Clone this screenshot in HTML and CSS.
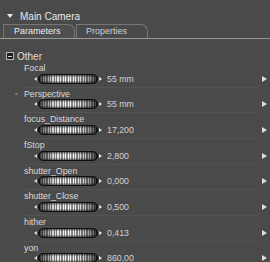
FILE: index.html
```html
<!DOCTYPE html>
<html lang="en">
<head>
    <meta charset="UTF-8">
    <title>Main Camera</title>
    <link rel="stylesheet" href="styles.css">
</head>
<body>
    <div class="panel">
        <div class="title"><span class="caret"></span>Main Camera</div>
        <div class="tabs">
            <div class="tab active">Parameters</div>
            <div class="tab">Properties</div>
        </div>
        <div class="group"><span class="minus"></span>Other</div>
        <div class="params">
            <div class="param">
                <div class="name">Focal</div>
                <div class="control"><div class="slider"><i class="nub left"></i><div class="track"></div><i class="nub right"></i></div><span class="value">55 mm</span><span class="more"></span></div>
            </div>
            <div class="param">
                <div class="name"><span class="key"></span>Perspective</div>
                <div class="control"><div class="slider"><i class="nub left"></i><div class="track"></div><i class="nub right"></i></div><span class="value">55 mm</span><span class="more"></span></div>
            </div>
            <div class="param">
                <div class="name">focus_Distance</div>
                <div class="control"><div class="slider"><i class="nub left"></i><div class="track"></div><i class="nub right"></i></div><span class="value">17,200</span><span class="more"></span></div>
            </div>
            <div class="param">
                <div class="name">fStop</div>
                <div class="control"><div class="slider"><i class="nub left"></i><div class="track"></div><i class="nub right"></i></div><span class="value">2,800</span><span class="more"></span></div>
            </div>
            <div class="param">
                <div class="name">shutter_Open</div>
                <div class="control"><div class="slider"><i class="nub left"></i><div class="track"></div><i class="nub right"></i></div><span class="value">0,000</span><span class="more"></span></div>
            </div>
            <div class="param">
                <div class="name">shutter_Close</div>
                <div class="control"><div class="slider"><i class="nub left"></i><div class="track"></div><i class="nub right"></i></div><span class="value">0,500</span><span class="more"></span></div>
            </div>
            <div class="param">
                <div class="name">hither</div>
                <div class="control"><div class="slider"><i class="nub left"></i><div class="track"></div><i class="nub right"></i></div><span class="value">0,413</span><span class="more"></span></div>
            </div>
            <div class="param">
                <div class="name">yon</div>
                <div class="control"><div class="slider"><i class="nub left"></i><div class="track"></div><i class="nub right"></i></div><span class="value">860,00</span><span class="more"></span></div>
            </div>
        </div>
    </div>
</body>
</html>
```

FILE: styles.css
```css
html, body {
    margin: 0;
    height: 100%;
    background-color: #4a4a4a;
}

body {
    font-family: 'Liberation Sans', Arial, sans-serif;
    color: #d8d8d8;
    overflow: hidden;
}

.panel {
    width: 270px;
}

/* titre du panneau */
.title {
    display: flex;
    align-items: center;
    height: 14px;
    margin-top: 9px;
    font-size: 10px;
    color: #e8e8e8;
}

.caret {
    width: 0;
    height: 0;
    margin: 0 7px 0 7px;
    border-left: 3.5px solid transparent;
    border-right: 3.5px solid transparent;
    border-top: 4px solid #e6e6e6;
}

/* onglets */
.tabs {
    display: flex;
    height: 14px;
    margin-top: 1px;
    padding-left: 3px;
    border-bottom: 1px solid #9a9a9a;
}

.tab {
    box-sizing: border-box;
    width: 72px;
    height: 14px;
    margin-right: 1px;
    padding-left: 9px;
    border: 1px solid #767676;
    border-bottom: none;
    border-top-right-radius: 7px;
    font-size: 9px;
    line-height: 13px;
    color: #cfcfcf;
}

.tab.active {
    padding-left: 10px;
    background-color: #4f4f4f;
    color: #ececec;
}

/* groupe "Other" */
.group {
    display: flex;
    align-items: center;
    height: 12px;
    margin-top: 11px;
    font-size: 10px;
    color: #dedede;
}

.minus {
    box-sizing: border-box;
    display: flex;
    align-items: center;
    justify-content: center;
    width: 8px;
    height: 8px;
    margin: 0 3px 0 6px;
    border: 1px solid #b5b5b5;
    background-color: #1e1e1e;
}

.minus::before {
    content: "";
    width: 4px;
    height: 1px;
    background-color: #cfcfcf;
}

/* lignes de paramètres */
.param {
    box-sizing: border-box;
    height: 25.7px;
    padding-top: 0.5px;
    background: linear-gradient(#535353, #535353) no-repeat 20px 100% / 236px 1px;
}

.name {
    display: flex;
    align-items: center;
    height: 11px;
    padding-left: 24px;
    font-size: 8.8px;
    color: #dadada;
}

.key {
    width: 3px;
    height: 2px;
    margin-left: -9px;
    margin-right: 6px;
    background-color: #7a7a7a;
    border-radius: 1px;
}

.control {
    display: flex;
    align-items: center;
    height: 10px;
    padding-left: 34px;
    padding-right: 3px;
}

.slider {
    display: flex;
    align-items: center;
    width: 68px;
    height: 10px;
}

.nub {
    width: 0;
    height: 0;
    border-top: 2.5px solid transparent;
    border-bottom: 2.5px solid transparent;
}

.nub.left {
    border-right: 3px solid #d6d6d6;
    margin-right: 1px;
}

.nub.right {
    border-left: 3px solid #e8e8e8;
    margin-left: 1px;
}

.track {
    flex: 1;
    box-sizing: border-box;
    height: 10px;
    border: 1px solid #0e0e0e;
    border-radius: 5px;
    background:
        repeating-linear-gradient(90deg, rgba(0, 0, 0, 0.45) 0 1px, transparent 1px 2.5px),
        linear-gradient(180deg, rgba(0, 0, 0, 0.55), transparent 30%, transparent 70%, rgba(0, 0, 0, 0.55)),
        linear-gradient(90deg, #1c1c1c 0, #8a8a8a 8%, #d6d6d6 26%, #ffffff 50%, #d6d6d6 74%, #8a8a8a 92%, #1c1c1c 100%);
}

.value {
    margin-left: 5px;
    font-size: 8.8px;
    color: #d2d2d2;
}

.more {
    width: 0;
    height: 0;
    margin-left: auto;
    border-top: 3.5px solid transparent;
    border-bottom: 3.5px solid transparent;
    border-left: 5px solid #dcdcdc;
}
```
